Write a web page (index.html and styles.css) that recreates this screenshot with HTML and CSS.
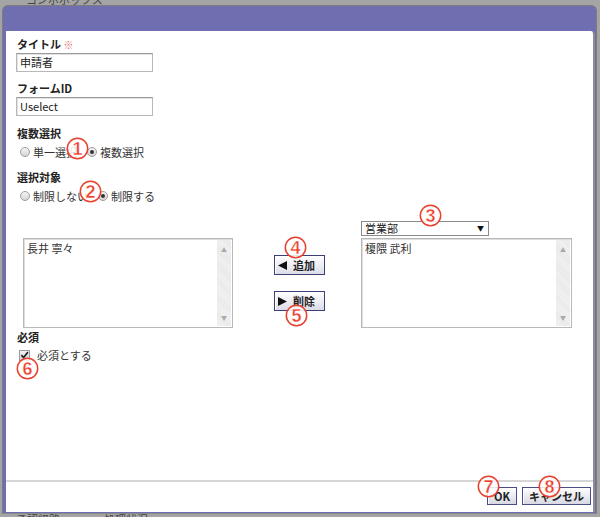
FILE: index.html
```html
<!DOCTYPE html>
<html lang="ja">
<head>
<meta charset="utf-8">
<title>ダイアログ</title>
<link rel="stylesheet" href="styles.css">
</head>
<body>
<div class="bg-strip bg-top"><span class="bg-text">コンボボックス</span></div>
<div class="dialog">
  <div class="dialog-head"></div>
  <div class="dialog-body">
    <div class="form">
      <div class="label">タイトル <span class="req">※</span></div>
      <div class="input">申請者</div>

      <div class="label gap8">フォームID</div>
      <div class="input">Uselect</div>

      <div class="label gap9">複数選択</div>
      <div class="radios">
        <span class="radio"></span><span class="opt">単一選択</span>
        <span class="radio checked second"></span><span class="opt">複数選択</span>
      </div>

      <div class="label gap9">選択対象</div>
      <div class="radios">
        <span class="radio"></span><span class="opt">制限しない</span>
        <span class="radio checked second"></span><span class="opt">制限する</span>
      </div>

      <div class="picker">
        <div class="select">営業部<span class="caret">▼</span></div>
        <div class="listbox list-left">
          <div class="items">長井 寧々</div>
          <div class="scroll"><span class="up">▲</span><span class="down">▼</span></div>
        </div>
        <div class="movers">
          <button class="mover"><svg class="tri" width="9" height="9" viewBox="0 0 9 9"><polygon points="0,4.5 9,0 9,9" fill="#111"/></svg><span>追加</span></button>
          <button class="mover"><svg class="tri" width="9" height="9" viewBox="0 0 9 9"><polygon points="9,4.5 0,0 0,9" fill="#111"/></svg><span>削除</span></button>
        </div>
        <div class="listbox list-right">
          <div class="items">榎隈 武利</div>
          <div class="scroll"><span class="up">▲</span><span class="down">▼</span></div>
        </div>
      </div>

      <div class="label gap1">必須</div>
      <div class="check-row">
        <span class="checkbox"><svg width="10" height="10" viewBox="0 0 10 10"><path d="M1.5 5.2 L4 7.8 L8.8 1.8" fill="none" stroke="#222" stroke-width="1.8"/></svg></span>
        <span class="opt">必須とする</span>
      </div>
    </div>
    <div class="footer">
      <button class="btn">OK</button>
      <button class="btn">キャンセル</button>
    </div>
  </div>
</div>
<div class="bg-strip bg-bottom"><span class="bg-text">承認経路</span><span class="bg-text far">処理状況</span></div>

<div class="mark" style="left:66px;top:137px"><svg width="23" height="23" viewBox="0 0 23 23"><circle cx="11.5" cy="11.5" r="10.2"/><text x="11.5" y="18">1</text></svg></div>
<div class="mark" style="left:79px;top:180px"><svg width="23" height="23" viewBox="0 0 23 23"><circle cx="11.5" cy="11.5" r="10.2"/><text x="11.5" y="18">2</text></svg></div>
<div class="mark" style="left:419px;top:204px"><svg width="23" height="23" viewBox="0 0 23 23"><circle cx="11.5" cy="11.5" r="10.2"/><text x="11.5" y="18">3</text></svg></div>
<div class="mark" style="left:284px;top:236px"><svg width="23" height="23" viewBox="0 0 23 23"><circle cx="11.5" cy="11.5" r="10.2"/><text x="11.5" y="18">4</text></svg></div>
<div class="mark" style="left:285px;top:304px"><svg width="23" height="23" viewBox="0 0 23 23"><circle cx="11.5" cy="11.5" r="10.2"/><text x="11.5" y="18">5</text></svg></div>
<div class="mark" style="left:16px;top:357px"><svg width="23" height="23" viewBox="0 0 23 23"><circle cx="11.5" cy="11.5" r="10.2"/><text x="11.5" y="18">6</text></svg></div>
<div class="mark" style="left:477px;top:475px"><svg width="23" height="23" viewBox="0 0 23 23"><circle cx="11.5" cy="11.5" r="10.2"/><text x="11.5" y="18">7</text></svg></div>
<div class="mark" style="left:538px;top:475px"><svg width="23" height="23" viewBox="0 0 23 23"><circle cx="11.5" cy="11.5" r="10.2"/><text x="11.5" y="18">8</text></svg></div>
</body>
</html>
```

FILE: styles.css
```css
* { box-sizing: border-box; }

html, body {
  margin: 0;
  padding: 0;
}

body {
  width: 600px;
  height: 517px;
  overflow: hidden;
  position: relative;
  background: #a4a4a4;
  font-family: "Noto Sans CJK JP", "Liberation Sans", sans-serif;
  font-size: 11px;
  color: #222;
}

.bg-strip {
  height: 5px;
  overflow: hidden;
  display: flex;
  padding-left: 26px;
}
.bg-text {
  display: block;
  font-size: 11px;
  line-height: 10px;
  color: #444;
  margin-top: -6px;
}
.bg-bottom {
  height: 3px;
  padding-left: 16px;
  gap: 44px;
}
.bg-bottom .bg-text { margin-top: 0; }

.dialog {
  margin-left: 2px;
  width: 595px;
  height: 509px;
  border: 1px solid #7c7c7c;
  border-bottom-color: #8a8a8a;
  border-radius: 6px 6px 0 0;
  background: #6e6eb0;
  padding: 0 1px 1px 3px;
  display: flex;
  flex-direction: column;
}

.dialog-head {
  height: 25px;
  flex: none;
}

.dialog-body {
  height: 481px;
  background: #fff;
  border-right: 2px solid #8c8c8c;
  border-top-right-radius: 4px;
  display: flex;
  flex-direction: column;
}

.form {
  padding: 5px 0 0 11px;
}

.label {
  font-weight: bold;
  font-size: 11px;
  line-height: 16px;
  height: 16px;
  color: #222;
}
.req { color: #e46a6a; font-weight: normal; font-size: 10px; }
.gap8 { margin-top: 8px; }
.gap9 { margin-top: 9px; }
.gap1 { margin-top: 1px; }

.input {
  margin-top: 1px;
  margin-left: -1px;
  width: 137px;
  height: 19px;
  border: 1px solid #b8b8b8;
  border-top-color: #9a9a9a;
  box-shadow: inset 1px 1px 0 #e2e2e2;
  padding-left: 3px;
  line-height: 17px;
  font-size: 11px;
  color: #222;
}

.radios {
  margin-top: 3px;
  height: 16px;
  display: flex;
  align-items: center;
}
.radio {
  width: 10px;
  height: 10px;
  margin-left: 3px;
  border-radius: 50%;
  border: 1px solid #9c9c9c;
  background: linear-gradient(#f4f4f4, #d6d6d6);
  display: flex;
  align-items: center;
  justify-content: center;
}
.radio.checked::after {
  content: "";
  width: 4px;
  height: 4px;
  border-radius: 50%;
  background: #333;
}
.radio.second { margin-left: 10px; }
.opt {
  margin-left: 3px;
  line-height: 16px;
  color: #333;
}

.picker {
  margin-top: 17px;
  margin-left: 6px;
  display: grid;
  grid-template-columns: 210px 128px 211px;
  grid-template-rows: 15px 90px;
  row-gap: 2px;
}
.select {
  grid-column: 3;
  grid-row: 1;
  width: 128px;
  height: 15px;
  border: 1px solid #8a8a8a;
  padding-left: 3px;
  line-height: 13px;
  font-size: 11px;
  display: flex;
  justify-content: space-between;
}
.caret {
  font-size: 7px;
  padding-right: 4px;
  color: #111;
}

.listbox {
  grid-row: 2;
  height: 90px;
  border: 1px solid #b8b8b8;
  box-shadow: inset 1px 1px 0 #dedede;
  display: flex;
}
.list-left { grid-column: 1; }
.list-right { grid-column: 3; }
.items {
  flex: 1;
  padding: 2px 3px;
  line-height: 14px;
  color: #333;
}
.scroll {
  width: 14px;
  margin: 1px 1px 1px 0;
  background: repeating-linear-gradient(45deg, #f2f2f2 0 1px, #e8e8e8 1px 2px);
  display: flex;
  flex-direction: column;
  justify-content: space-between;
  align-items: center;
  color: #aaa;
  font-size: 6px;
  line-height: 8px;
  padding: 6px 0 4px;
}

.movers {
  grid-column: 2;
  grid-row: 2;
  padding: 17px 0 0 41px;
  display: flex;
  flex-direction: column;
  gap: 16px;
}
.mover {
  width: 51px;
  height: 20px;
  padding: 0 0 0 3px;
  border: 1px solid #3f3f78;
  background: linear-gradient(#ffffff, #dcdce8);
  box-shadow: inset 1px 1px 0 #fff;
  display: flex;
  align-items: center;
  font-family: "Noto Sans CJK JP", "Liberation Sans", sans-serif;
  font-weight: bold;
  font-size: 11px;
  color: #222;
}
.mover span { margin-left: 6px; }
.tri { flex: none; }

.check-row {
  margin-top: 2px;
  height: 16px;
  display: flex;
  align-items: center;
}
.checkbox {
  width: 11px;
  height: 11px;
  margin-left: 2px;
  border: 1px solid #9c9c9c;
  background: linear-gradient(#f2f2f2, #d4d4d4);
  display: flex;
  align-items: center;
  justify-content: center;
}
.check-row .opt { margin-left: 7px; }

.footer {
  margin-top: auto;
  border-top: 2px solid #d6d6d6;
  padding: 5px 2px 7px 0;
  display: flex;
  justify-content: flex-end;
  gap: 5px;
}
.btn {
  height: 18px;
  padding: 0 6px;
  border: 1px solid #4c4c84;
  background: linear-gradient(#ffffff, #d8d8e4);
  box-shadow: inset 1px 1px 0 #fff;
  font-family: "Noto Sans CJK JP", "Liberation Sans", sans-serif;
  font-weight: bold;
  font-size: 11px;
  line-height: 14px;
  color: #222;
}

.mark {
  position: absolute;
  width: 23px;
  height: 23px;
}
.mark svg { display: block; }
.mark circle {
  fill: #ffffff;
  fill-opacity: 0.85;
  stroke: #e8412e;
  stroke-width: 1.5;
}
.mark text {
  font-family: "Liberation Sans", Arial, sans-serif;
  font-weight: bold;
  font-size: 18px;
  fill: #ec3e2a;
  stroke: #ffffff;
  stroke-width: 0.4;
  text-anchor: middle;
}
```
